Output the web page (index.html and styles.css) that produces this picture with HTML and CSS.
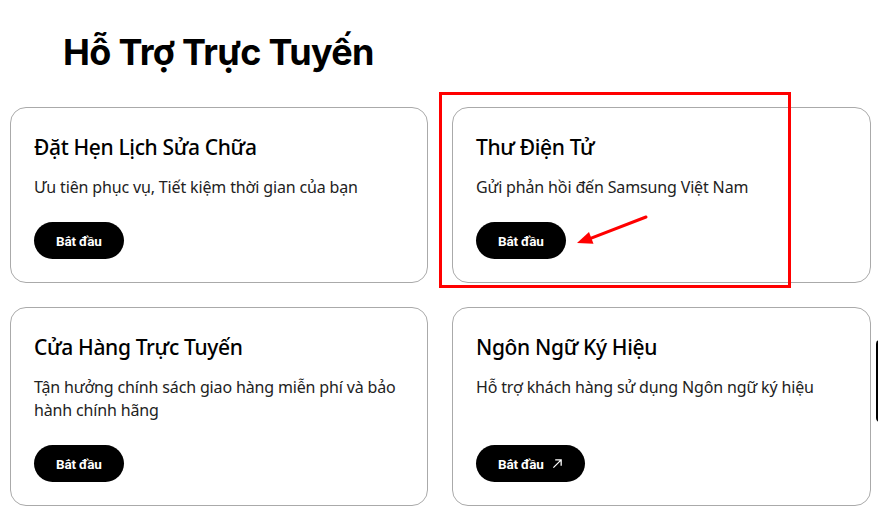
FILE: index.html
```html
<!DOCTYPE html>
<html lang="vi">
<head>
<meta charset="utf-8">
<title>Hỗ Trợ Trực Tuyến</title>
<link rel="stylesheet" href="styles.css">
</head>
<body>
<main class="page">
  <h1 class="page-title">Hỗ Trợ Trực Tuyến</h1>
  <section class="grid">
    <article class="card">
      <h2 class="card-title">Đặt Hẹn Lịch Sửa Chữa</h2>
      <p class="card-desc">Ưu tiên phục vụ, Tiết kiệm thời gian của bạn</p>
      <a class="btn" href="#">Bắt đầu</a>
    </article>
    <article class="card">
      <h2 class="card-title">Thư Điện Tử</h2>
      <p class="card-desc">Gửi phản hồi đến Samsung Việt Nam</p>
      <a class="btn" href="#">Bắt đầu</a>
    </article>
    <article class="card">
      <h2 class="card-title">Cửa Hàng Trực Tuyến</h2>
      <p class="card-desc">Tận hưởng chính sách giao hàng miễn phí và bảo hành chính hãng</p>
      <a class="btn" href="#">Bắt đầu</a>
    </article>
    <article class="card">
      <h2 class="card-title">Ngôn Ngữ Ký Hiệu</h2>
      <p class="card-desc">Hỗ trợ khách hàng sử dụng Ngôn ngữ ký hiệu</p>
      <a class="btn" href="#">Bắt đầu
        <svg class="btn-icon" viewBox="0 0 12 12" width="11" height="11" aria-hidden="true"><path d="M1.5 10.5 L10 2 M3.5 2 H10 V8.5" fill="none" stroke="#fff" stroke-width="1.4"/></svg>
      </a>
    </article>
  </section>
</main>
<div class="highlight"></div>
<svg class="pointer" width="90" height="45" viewBox="570 210 90 45" aria-hidden="true">
  <line x1="646" y1="217" x2="588" y2="239.3" stroke="#ff0000" stroke-width="3" stroke-linecap="round"/>
  <polygon points="577,243 593.5,243.8 589,232" fill="#ff0000"/>
</svg>
<div class="side-tab"></div>
</body>
</html>
```

FILE: styles.css
```css
html, body {
  margin: 0;
  padding: 0;
  background: #fff;
}
body {
  width: 878px;
  height: 530px;
  overflow: hidden;
  position: relative;
  font-family: "Noto Sans", "Open Sans", sans-serif;
  color: #000;
}
.page {
  padding: 29px 0 0 10px;
}
.page-title {
  margin: 0 0 32px 53px;
  font-family: "Inter", "Noto Sans", sans-serif;
  font-weight: 700;
  font-size: 36px;
  line-height: 46px;
  letter-spacing: -0.7px;
  color: #000;
}
.grid {
  display: grid;
  grid-template-columns: 418px 419px;
  column-gap: 24px;
  row-gap: 24px;
}
.card {
  box-sizing: border-box;
  border: 1px solid #aaaaaa;
  border-radius: 16px;
  padding: 24px 23px 23px 23px;
  display: flex;
  flex-direction: column;
  align-items: flex-start;
}
.card-title {
  margin: 0;
  font-size: 21px;
  line-height: 30px;
  font-weight: 500;
  letter-spacing: -0.35px;
  color: #000;
}
.card-desc {
  margin: 14px 0 23px 0;
  font-size: 16px;
  line-height: 23px;
  letter-spacing: -0.15px;
  color: #222;
}
.btn {
  margin-top: auto;
  box-sizing: border-box;
  height: 37px;
  padding: 0 22px;
  border-radius: 19px;
  background: #000;
  color: #fff;
  text-decoration: none;
  font-family: "Roboto", "Noto Sans", sans-serif;
  font-weight: 700;
  font-size: 13.5px;
  letter-spacing: -0.2px;
  display: inline-flex;
  align-items: center;
  gap: 8px;
}
.btn-icon {
  display: block;
}
.highlight {
  position: absolute;
  left: 439px;
  top: 92px;
  width: 346px;
  height: 190px;
  border: 3px solid #ff0000;
}
.pointer {
  position: absolute;
  left: 570px;
  top: 210px;
}
.side-tab {
  position: absolute;
  left: 876px;
  top: 340px;
  width: 10px;
  height: 82px;
  background: #000;
  border-radius: 4px 0 0 4px;
}
```
